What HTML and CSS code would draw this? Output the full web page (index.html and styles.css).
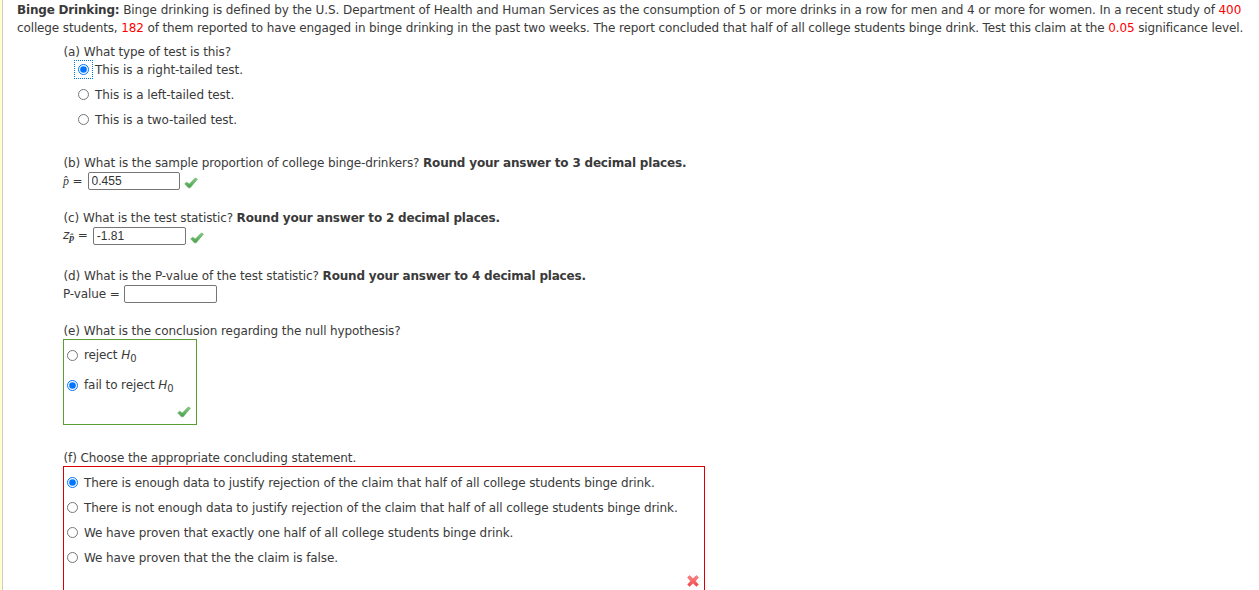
FILE: index.html
```html
<!DOCTYPE html>
<html lang="en">
<head>
    <meta charset="UTF-8">
    <meta name="viewport" content="width=device-width, initial-scale=1.0">
    <title>Binge Drinking</title>
    <link rel="stylesheet" href="styles.css">
</head>
<body>
    <svg class="icon-defs" aria-hidden="true">
        <defs>
            <linearGradient id="green" x1="0" y1="0" x2="0" y2="1">
                <stop offset="0" stop-color="#8acb87"/>
                <stop offset="1" stop-color="#46a048"/>
            </linearGradient>
            <linearGradient id="red" x1="0" y1="0" x2="0" y2="1">
                <stop offset="0" stop-color="#ff8a86"/>
                <stop offset="1" stop-color="#ee4548"/>
            </linearGradient>
        </defs>
        <symbol id="check" viewBox="0 0 14 12">
            <path d="M.7 6.8 L2.8 5.2 L5.3 7 L11.3 1 L13.4 2.2 L6.2 10.8 L4.4 10.8 Z" fill="url(#green)" stroke="#6ab569" stroke-width=".7" stroke-linejoin="round"/>
        </symbol>
        <symbol id="cross" viewBox="0 0 12 12">
            <path d="M2.5 .6 L6 3.7 L9.5 .6 L11.4 2.5 L8.3 6 L11.4 9.5 L9.5 11.4 L6 8.3 L2.5 11.4 L.6 9.5 L3.7 6 L.6 2.5 Z" fill="url(#red)" stroke="#f0686a" stroke-width=".7" stroke-linejoin="round"/>
        </symbol>
    </svg>

    <main class="question">
        <div class="intro">
            <p class="intro-first"><b>Binge Drinking:</b> Binge drinking is defined by the U.S. Department of Health and Human Services as the consumption of 5 or more drinks in a row for men and 4 or more for women. In a recent study of <span class="value">400</span></p>
            <p class="intro-second">college students, <span class="value">182</span> of them reported to have engaged in binge drinking in the past two weeks. The report concluded that half of all college students binge drink. Test this claim at the <span class="value">0.05</span> significance level.</p>
        </div>

        <section class="part part-a">
            <p>(a) What type of test is this?</p>
            <div class="options">
                <label class="option"><span class="focus"><input type="radio" name="tail" checked></span>This is a right-tailed test.</label>
                <label class="option"><input type="radio" name="tail">This is a left-tailed test.</label>
                <label class="option"><input type="radio" name="tail">This is a two-tailed test.</label>
            </div>
        </section>

        <section class="part part-b">
            <p>(b) What is the sample proportion of college binge-drinkers? <b>Round your answer to 3 decimal places.</b></p>
            <div class="answer">
                <span class="symbol"><i class="math">p̂</i> =</span>
                <input type="text" value="0.455">
                <svg class="check"><use href="#check"/></svg>
            </div>
        </section>

        <section class="part part-c">
            <p>(c) What is the test statistic? <b>Round your answer to 2 decimal places.</b></p>
            <div class="answer">
                <span class="symbol"><i>z</i><i class="math sub">p̂</i> =</span>
                <input type="text" value="-1.81">
                <svg class="check"><use href="#check"/></svg>
            </div>
        </section>

        <section class="part part-d">
            <p>(d) What is the P-value of the test statistic? <b>Round your answer to 4 decimal places.</b></p>
            <div class="answer">
                <span class="symbol">P-value =</span>
                <input type="text" value="">
            </div>
        </section>

        <section class="part part-e">
            <p>(e) What is the conclusion regarding the null hypothesis?</p>
            <div class="box box-correct">
                <label class="option"><input type="radio" name="null"><span>reject <i>H</i><sub>0</sub></span></label>
                <label class="option"><input type="radio" name="null" checked><span>fail to reject <i>H</i><sub>0</sub></span></label>
                <svg class="check"><use href="#check"/></svg>
            </div>
        </section>

        <section class="part part-f">
            <p>(f) Choose the appropriate concluding statement.</p>
            <div class="box box-wrong">
                <label class="option"><input type="radio" name="conclusion" checked>There is enough data to justify rejection of the claim that half of all college students binge drink.</label>
                <label class="option"><input type="radio" name="conclusion">There is not enough data to justify rejection of the claim that half of all college students binge drink.</label>
                <label class="option"><input type="radio" name="conclusion">We have proven that exactly one half of all college students binge drink.</label>
                <label class="option"><input type="radio" name="conclusion">We have proven that the the claim is false.</label>
                <svg class="cross"><use href="#cross"/></svg>
            </div>
        </section>
    </main>
</body>
</html>
```
FILE: styles.css
```css
* {
    margin: 0;
    padding: 0;
    box-sizing: border-box;
}

body {
    height: 590px;
    overflow: hidden;
    background-color: #fff;
    color: #3a3a3a;
    font-family: Verdana, "DejaVu Sans", sans-serif;
    font-size: 12px;
    letter-spacing: -0.1px;
    line-height: 18px;
    white-space: nowrap;
}

.icon-defs {
    display: block;
    width: 0;
    height: 0;
}

.question {
    height: 590px;
    margin-left: 2px;
    padding: 1px 0 0 14px;
    border-left: 1px solid #ccc;
    box-shadow: -2px 0 0 #ffffcc;
}

b {
    letter-spacing: -0.19px;
}

.intro-first {
    letter-spacing: -0.084px;
}

.intro-second {
    letter-spacing: -0.13px;
}

.value {
    color: #f00;
}

.part {
    padding-left: 46px;
}

.part-a { padding-top: 6px; }
.part-b { padding-top: 22px; }
.part-c { padding-top: 19px; }
.part-d { padding-top: 22px; }
.part-e { padding-top: 19px; }
.part-f { padding-top: 24px; }

.part > p {
    height: 17px;
    padding-left: 0.5px;
}

.options {
    padding-left: 15px;
    letter-spacing: -0.07px;
}

.option {
    display: flex;
    align-items: center;
    height: 25px;
}

.options .option:first-child {
    height: 19px;
    margin-bottom: 3px;
}

input[type="radio"] {
    flex: none;
    width: 11px;
    height: 11px;
    margin-right: 6px;
}

.focus {
    display: flex;
    align-items: center;
    width: 19px;
    height: 19px;
    margin-left: -4px;
    margin-right: 2px;
    padding-left: 3px;
    border: 1px dotted #0078d7;
}

.answer {
    display: flex;
    align-items: center;
    height: 19px;
}

.part-d .answer {
    height: 18px;
    margin-top: 1px;
}

.symbol {
    margin-right: 5px;
}

.part-d .symbol {
    margin-right: 4px;
}

.math {
    font-family: "Liberation Serif", serif;
}

.sub {
    position: relative;
    top: 2px;
    font-size: 10px;
    font-weight: bold;
}

input[type="text"] {
    width: 93px;
    height: 18px;
    padding: 0 3px;
    border: 1px solid #767676;
    border-radius: 2px;
    color: #333;
    font-family: "Liberation Sans", sans-serif;
    font-size: 12px;
}

.part-b input[type="text"] {
    width: 92px;
}

.check {
    width: 14px;
    height: 12px;
}

.answer .check {
    margin: 4px 0 0 4px;
}

.box {
    display: flex;
    flex-direction: column;
    padding-left: 3px;
    border: 1px solid;
}

.box-correct {
    width: 134px;
    height: 86px;
    border-color: #5a9e34;
}

.box-correct .option {
    height: 30px;
}

.box-correct .check {
    margin: 6px 5px 0 auto;
}

sub {
    font-size: 10px;
    line-height: 0;
    vertical-align: -3px;
}

.box-wrong {
    width: 642px;
    height: 130px;
    padding-top: 3px;
    border-color: #d00;
}

.cross {
    width: 12px;
    height: 12px;
    margin: 5px 5px 0 auto;
}
```
